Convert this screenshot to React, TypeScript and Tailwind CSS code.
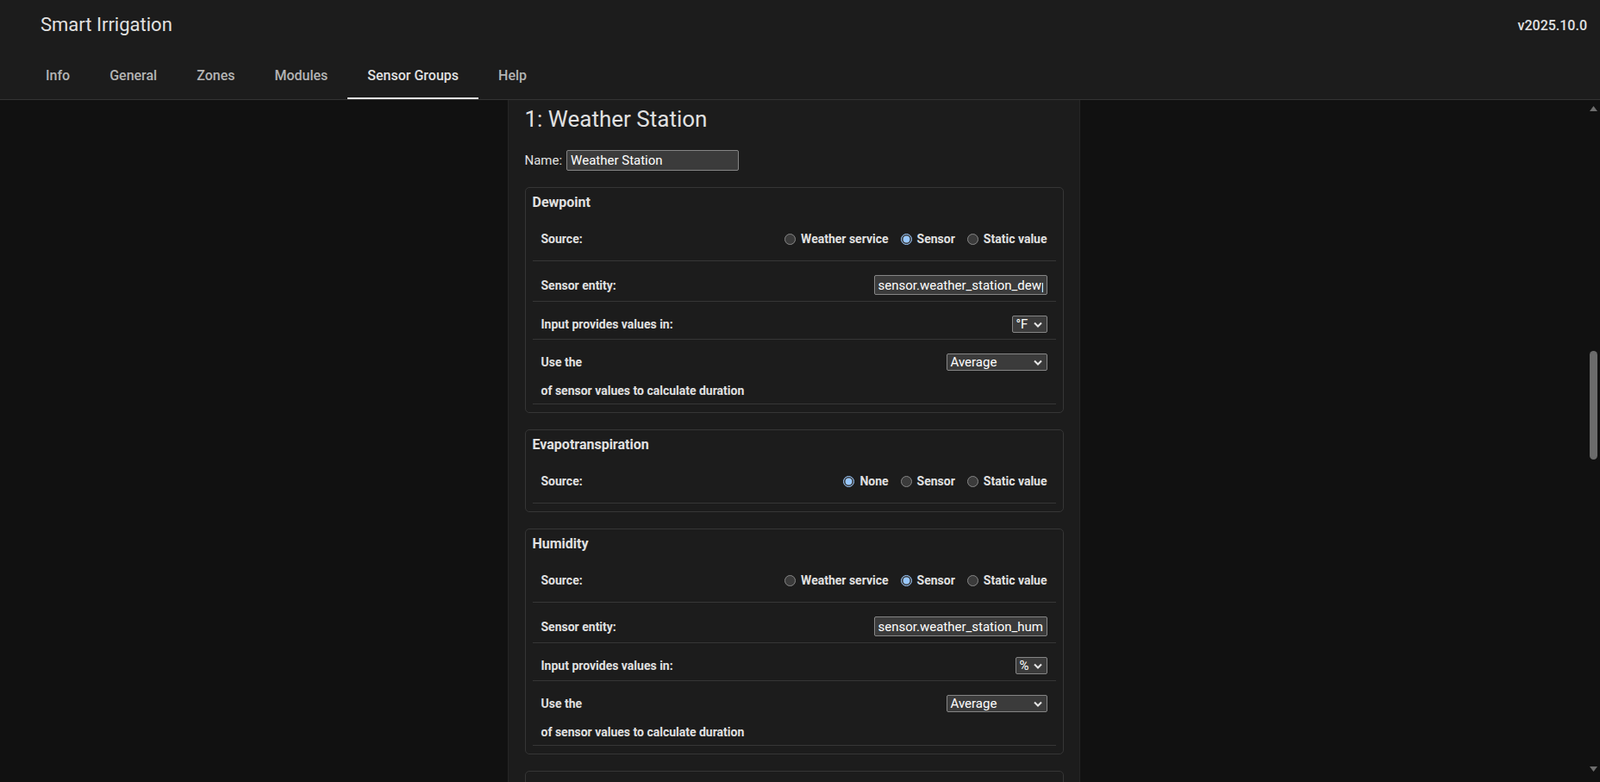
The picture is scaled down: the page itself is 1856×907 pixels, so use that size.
import React from 'react';

const tabs = ['Info', 'General', 'Zones', 'Modules', 'Sensor Groups', 'Help'];

function Chevron() {
  return (
    <svg width="10" height="7" viewBox="0 0 10 7" fill="none">
      <polyline points="1,1.5 5,5.5 9,1.5" stroke="#e8e8e8" strokeWidth="2" />
    </svg>
  );
}

function FakeSelect({ value, width }: { value: string; width: string }) {
  return (
    <div
      className={`flex h-[20px] ${width} items-center justify-between rounded-[2px] border border-[#858585] bg-[#3b3b3b] pl-[4px] pr-[5px] text-[15px] leading-[18px] font-normal text-white`}
    >
      <span>{value}</span>
      <Chevron />
    </div>
  );
}

function SourceRow({ name, options, checked }: { name: string; options: string[]; checked: string }) {
  return (
    <div className="flex items-center justify-between border-b border-[#363636] px-[10px] pt-[21px] pb-[14px]">
      <span className="text-[14px] leading-[20px] font-bold">Source:</span>
      <div className="flex h-[22px] items-center gap-[14px]">
        {options.map((o) => (
          <label key={o} className="flex items-center gap-[6px] text-[14px] leading-[20px] font-bold">
            <input
              type="radio"
              name={name}
              defaultChecked={o === checked}
              className="m-0 h-[13px] w-[13px]"
            />
            {o}
          </label>
        ))}
      </div>
    </div>
  );
}

function SensorRows({ entity, unit, unitWidth }: { entity: string; unit: string; unitWidth: string }) {
  return (
    <>
      <div className="flex items-center justify-between border-b border-[#363636] px-[10px] pt-[16px] pb-[7px]">
        <span className="text-[14px] leading-[20px] font-bold">Sensor entity:</span>
        <input
          type="text"
          defaultValue={entity}
          className="h-[23px] w-[201px] rounded-[2px] border border-[#858585] bg-[#3b3b3b] px-[4px] text-[15px] font-normal text-white outline-none"
        />
      </div>
      <div className="flex items-center justify-between border-b border-[#363636] px-[10px] pt-[16px] pb-[7px]">
        <span className="text-[14px] leading-[20px] font-bold">Input provides values in:</span>
        <FakeSelect value={unit} width={unitWidth} />
      </div>
      <div className="border-b border-[#363636] px-[10px] pt-[16px] pb-[5px]">
        <div className="flex h-[20px] items-center justify-between">
          <span className="text-[14px] leading-[20px] font-bold">Use the</span>
          <FakeSelect value="Average" width="w-[117px]" />
        </div>
        <div className="mt-[13px] text-[14px] leading-[20px] font-bold">of sensor values to calculate duration</div>
      </div>
    </>
  );
}

function Card({ title, children }: { title: string; children?: React.ReactNode }) {
  return (
    <div className="rounded-[5px] border border-[#363636] px-[8px] pt-[7px] pb-[9px]">
      <h3 className="text-[16px] leading-[20px] font-bold">{title}</h3>
      {children}
    </div>
  );
}

export default function App() {
  return (
    <div className="flex h-screen flex-col overflow-hidden bg-[#111111] font-[Roboto,'Liberation_Sans',sans-serif] text-[#e1e1e1] [color-scheme:dark]">
      <header className="shrink-0 border-b border-[#333333] bg-[#1c1c1c]">
        <div className="flex h-[56px] items-center justify-between pl-[47px] pr-[15px]">
          <h1 className="pt-[1px] text-[22px] font-normal">Smart Irrigation</h1>
          <span className="pt-[4px] text-[16px] font-medium">v2025.10.0</span>
        </div>
        <nav className="flex h-[59px] pl-[30px]">
          {tabs.map((t) => (
            <div
              key={t}
              className={
                t === 'Sensor Groups'
                  ? 'flex h-full items-center border-b-2 border-[#e1e1e1] px-[23px] pt-[6px] text-[16px] font-medium text-[#e1e1e1]'
                  : 'flex h-full items-center border-b-2 border-transparent px-[23px] pt-[6px] text-[16px] font-medium text-[#b4b4b4]'
              }
            >
              {t}
            </div>
          ))}
        </nav>
      </header>

      <div className="flex min-h-0 flex-1">
        <main className="flex-1 overflow-hidden">
          <div className="mx-auto min-h-full w-[664px] border-x border-[#262626] bg-[#1c1c1c] pt-[6px] pl-[19px] pr-[18px]">
            <h2 className="text-[26px] leading-[32px] font-normal">1: Weather Station</h2>
            <div className="mt-[20px] flex h-[24px] items-center gap-[5px] text-[15px]">
              <span>Name:</span>
              <input
                type="text"
                defaultValue="Weather Station"
                className="h-[24px] w-[200px] rounded-[2px] border border-[#858585] bg-[#3b3b3b] px-[4px] text-[15px] text-white outline-none"
              />
            </div>

            <div className="mt-[19px] flex flex-col gap-[19px]">
              <Card title="Dewpoint">
                <SourceRow name="dewpoint" options={['Weather service', 'Sensor', 'Static value']} checked="Sensor" />
                <SensorRows entity="sensor.weather_station_dewpoint" unit="°F" unitWidth="w-[41px]" />
              </Card>
              <Card title="Evapotranspiration">
                <SourceRow name="evapotranspiration" options={['None', 'Sensor', 'Static value']} checked="None" />
              </Card>
              <Card title="Humidity">
                <SourceRow name="humidity" options={['Weather service', 'Sensor', 'Static value']} checked="Sensor" />
                <SensorRows entity="sensor.weather_station_humidity" unit="%" unitWidth="w-[37px]" />
              </Card>
              {/* next card, only its top edge is in view */}
              <div className="h-[100px] rounded-[5px] border border-[#363636]" />
            </div>
          </div>
        </main>

        {/* scrollbar */}
        <div className="flex w-[15px] shrink-0 flex-col items-center bg-[#111111]">
          <svg className="mt-[7px]" width="9" height="6" viewBox="0 0 9 6">
            <polygon points="0,6 4.5,0 9,6" fill="#6e6e6e" />
          </svg>
          <div className="mt-[278px] h-[126px] w-[9px] rounded-full bg-[#6b6b6b]" />
          <div className="flex-1" />
          <svg className="mb-[12px]" width="9" height="6" viewBox="0 0 9 6">
            <polygon points="0,0 9,0 4.5,6" fill="#6e6e6e" />
          </svg>
        </div>
      </div>
    </div>
  );
}
